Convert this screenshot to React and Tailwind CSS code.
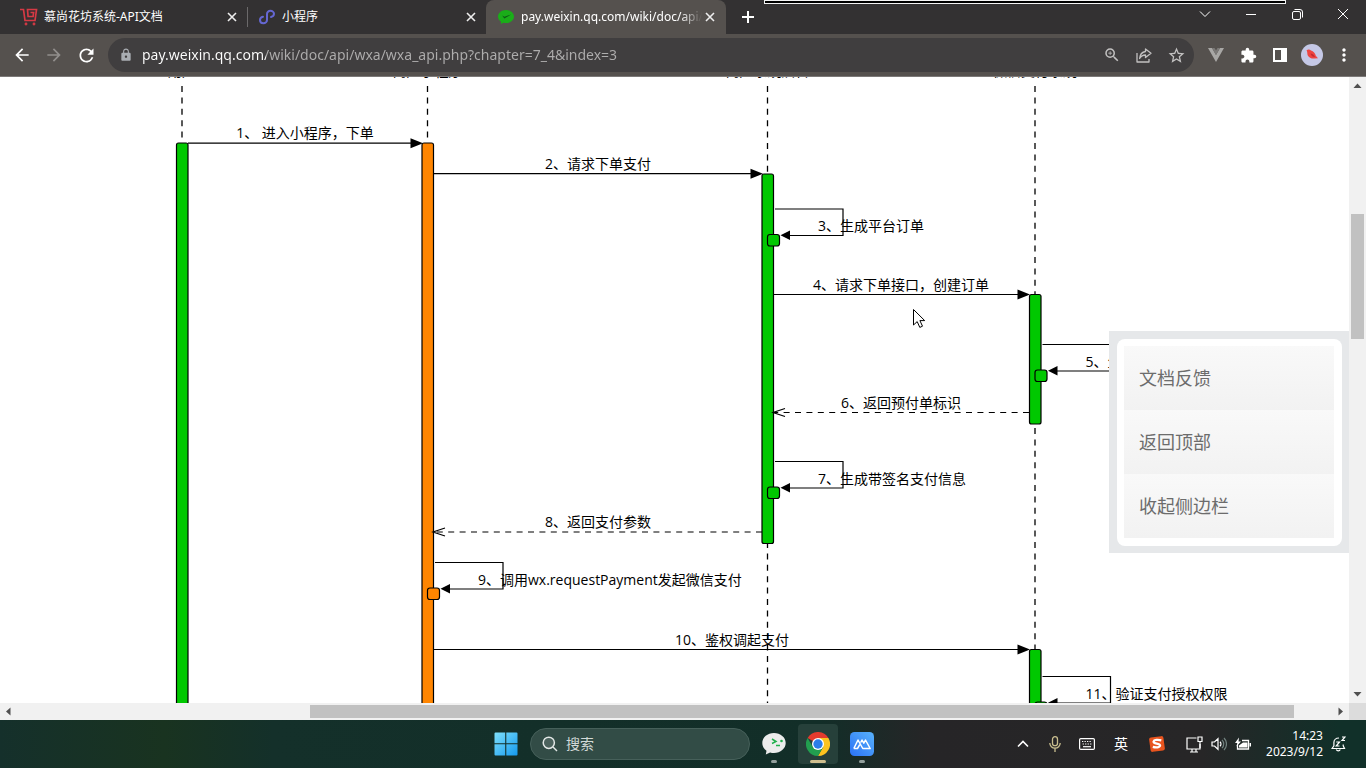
import React from "react";
import {
  MdArrowBack,
  MdArrowForward,
  MdRefresh,
  MdLock,
  MdStarBorder,
  MdExtension,
  MdMoreVert,
  MdOutlineZoomIn,
} from "react-icons/md";

const GREEN = "#00c800";
const ORANGE = "#ff8500";

/* ---------- Browser icons ---------- */

function CloseIcon() {
  return (
    <svg width="16" height="16" viewBox="0 0 16 16" stroke="currentColor" strokeWidth="1.6" fill="none">
      <path d="M4 4l8 8M12 4l-8 8" />
    </svg>
  );
}

function CartIcon() {
  return (
    <svg width="18" height="18" viewBox="0 0 18 18" fill="none" stroke="#d63a45" strokeWidth="1.7">
      <path d="M0 1.500h3.500l1.500 11h10l1.500-11H7.500l.6 7h5l.5-4H10.500" />
      <circle cx="6" cy="16" r=".6" />
      <circle cx="14" cy="16" r=".6" />
    </svg>
  );
}

function MiniProgramIcon() {
  return (
    <svg width="18" height="18" viewBox="0 0 18 18" fill="none" stroke="#6567d2" strokeWidth="2" strokeLinecap="round">
      <path d="M5 8.800C3 9.300 2 10.500 2 12c0 1.800 1.400 3.200 3.400 3.200S9 13.800 9 12V6c0-1.900 1.500-3.200 3.400-3.200S16 4.200 16 5.800c0 1.700-1.200 2.800-3 3.200" />
    </svg>
  );
}

function WxPayIcon() {
  return (
    <svg width="18" height="18" viewBox="0 0 18 18">
      <path fill="#1aad19" d="M9 2C4.500 2 1 4.900 1 8.600c0 2.200 1.200 4 3.100 5.200L3.700 16l2.600-1.300c.8.300 1.700.4 2.700.4 4.500 0 8-2.900 8-6.500S13.500 2 9 2z" />
      <path fill="#0c5a15" d="M5.200 7.500l2.100 3 7-4.100-6.900 2.300z" />
    </svg>
  );
}

function ShareIcon() {
  return (
    <svg width="18" height="18" viewBox="0 0 18 18" fill="none" stroke="currentColor" strokeWidth="1.300" strokeLinejoin="round">
      <path d="M2 7v9h12v-3" />
      <path d="M10.500 3l5.500 4.300-5.500 4.300V9C8 9 6 10 4.600 12.500 5 8.500 7 6 10.500 5.500z" />
    </svg>
  );
}

function VueIcon() {
  return (
    <svg width="16" height="16" viewBox="0 0 16 16">
      <path fill="#a8a7a5" d="M0 1h4l4 7 4-7h4L8 15z" />
      <path fill="#7c7a78" d="M4 1h2.500L8 3.600 9.500 1H12L8 8z" />
    </svg>
  );
}

function SidePanelIcon() {
  return (
    <svg width="14" height="14" viewBox="0 0 14 14">
      <path fill="#fff" fillRule="evenodd" d="M0 0h14v14H0zM2 2v10h6V2z" />
    </svg>
  );
}

function Avatar() {
  return (
    <svg width="22" height="22" viewBox="0 0 22 22">
      <circle cx="11" cy="11" r="11" fill="#c5c8e6" />
      <path fill="#ee4440" d="M5.500 6.500C6.700 5 8.800 5 10 6.500c2.500.8 4.300 2.800 4.800 5.200l2.200 2.600-3.200.2c-3 .5-5.800-.8-7-3-.6-1.500-.4-3.200-.8-4.300z" />
      <path fill="#c42a30" d="M9.500 9.500c2 .2 3.600 1.300 4.500 3.500-2.200 0-3.900-1-4.500-3.500z" />
    </svg>
  );
}

/* ---------- Browser chrome ---------- */

function Tab({ icon, title, active, divider }) {
  return (
    <div
      className={
        active
          ? "flex h-[34px] w-[240px] items-center rounded-t-lg bg-[#55514e] pr-2 pl-[11px]"
          : "flex h-[34px] w-[238px] items-center pr-[7px] pl-[10px]"
      }
    >
      <button type="button" className="flex min-w-0 flex-1 items-center gap-[6px] text-left">
        <span className="shrink-0">{icon}</span>
        <span
          className={
            active
              ? "overflow-hidden whitespace-nowrap text-xs text-white [mask-image:linear-gradient(to_right,black_88%,transparent)]"
              : "overflow-hidden whitespace-nowrap text-xs text-white"
          }
        >
          {title}
        </span>
      </button>
      <button type="button" aria-label="关闭标签页" className="shrink-0 text-[#eeeeee]">
        <CloseIcon />
      </button>
      {divider && <span className="ml-[7px] -mr-[7px] h-5 w-px bg-[#6b696a]" />}
    </div>
  );
}

function TabStrip() {
  return (
    <header className="relative flex h-[34px] shrink-0 items-end bg-[#333132]">
      <div className="flex pl-[10px]">
        <Tab icon={<CartIcon />} title="慕尚花坊系统-API文档" divider />
        <Tab icon={<MiniProgramIcon />} title="小程序" />
        <Tab icon={<WxPayIcon />} title="pay.weixin.qq.com/wiki/doc/api/wxa" active />
      </div>
      <button type="button" aria-label="新标签页" className="flex h-[34px] w-11 items-center justify-center text-white">
        <svg width="12" height="12" viewBox="0 0 12 12" stroke="currentColor" strokeWidth="2">
          <path d="M6 0v12M0 6h12" />
        </svg>
      </button>
      <div className="ml-auto flex h-[34px] items-start pt-[2px] text-white">
        <button type="button" aria-label="搜索标签页" className="flex h-6 w-[46px] items-center justify-center">
          <svg width="12" height="12" viewBox="0 0 12 12" fill="none" stroke="currentColor">
            <path d="M1 3.500l5 5 5-5" />
          </svg>
        </button>
        <button type="button" aria-label="最小化" className="flex h-6 w-[46px] items-center justify-center">
          <svg width="10" height="10" viewBox="0 0 10 10" stroke="currentColor">
            <path d="M0 5.500h10" />
          </svg>
        </button>
        <button type="button" aria-label="还原" className="flex h-6 w-[46px] items-center justify-center">
          <svg width="11" height="11" viewBox="0 0 11 11" fill="none" stroke="currentColor">
            <rect x=".5" y="2.500" width="8" height="8" rx="1.500" />
            <path d="M2.500 .5h5.500a2.500 2.500 0 0 1 2.500 2.500v5.500" />
          </svg>
        </button>
        <button type="button" aria-label="关闭" className="flex h-6 w-[46px] items-center justify-center">
          <svg width="12" height="12" viewBox="0 0 12 12" stroke="currentColor">
            <path d="M1 1l10 10M11 1L1 11" />
          </svg>
        </button>
      </div>
      <div className="absolute top-0 right-20 left-[764px] h-1 border border-[#f2f2f2] bg-black" />
    </header>
  );
}

function Toolbar() {
  return (
    <div className="flex h-[43px] shrink-0 items-center border-b border-[#7c7978] bg-[#55514e] pr-[6px]">
      <div className="flex w-[108px] items-center gap-3 pl-3 text-white">
        <button type="button" aria-label="后退"><MdArrowBack size={20} /></button>
        <button type="button" aria-label="前进" className="text-[#918e8c]"><MdArrowForward size={20} /></button>
        <button type="button" aria-label="刷新"><MdRefresh size={21} /></button>
      </div>
      <div className="flex h-[34px] min-w-0 flex-1 items-center rounded-full bg-[#403e3f] pr-2 pl-[11px] text-[#c2c1c1]">
        <MdLock size={14} className="shrink-0 text-[#a9adb2]" />
        <input
          type="text"
          aria-label="地址"
          defaultValue="pay.weixin.qq.com/wiki/doc/api/wxa/wxa_api.php?chapter=7_4&index=3"
          className="ml-[9px] min-w-0 flex-1 bg-[linear-gradient(to_right,#ffffff_124px,#aeadad_124px)] bg-clip-text text-sm text-transparent outline-none"
        />
        <div className="flex items-center gap-[14px]">
          <button type="button" aria-label="缩放"><MdOutlineZoomIn size={18} /></button>
          <button type="button" aria-label="分享"><ShareIcon /></button>
          <button type="button" aria-label="收藏"><MdStarBorder size={19} /></button>
        </div>
      </div>
      <div className="flex items-center pl-[6px] text-white">
        <button type="button" aria-label="Vue" className="flex w-8 justify-center"><VueIcon /></button>
        <button type="button" aria-label="扩展程序" className="flex w-8 justify-center"><MdExtension size={17} /></button>
        <button type="button" aria-label="侧边栏" className="flex w-8 justify-center"><SidePanelIcon /></button>
        <button type="button" aria-label="用户" className="flex w-8 justify-center"><Avatar /></button>
        <button type="button" aria-label="更多" className="flex w-8 justify-center"><MdMoreVert size={20} /></button>
      </div>
    </div>
  );
}

/* ---------- Sequence diagram ---------- */

function Bar({ x, y1, y2, fill }) {
  return <rect x={x} y={y1} width="11.500" height={y2 - y1} rx="2" fill={fill} stroke="#000" strokeWidth="1.200" />;
}

function Call({ from, to, y, label, cx }) {
  return (
    <g>
      <path d={`M${from} ${y}H${to - 10}`} stroke="#000" strokeWidth="1.200" />
      <path d={`M${to + 1} ${y}l-12.500-5v10z`} />
      <text x={cx} y={y - 5} textAnchor="middle">{label}</text>
    </g>
  );
}

function Reply({ from, to, y, label, cx }) {
  return (
    <g>
      <path d={`M${from} ${y}H${to}`} stroke="#000" strokeWidth="1.200" strokeDasharray="6 5.400" />
      <path d={`M${to + 11} ${y - 4}L${to - 1} ${y}l12 4`} fill="none" stroke="#000" strokeWidth="1.200" />
      <text x={cx} y={y - 5} textAnchor="middle">{label}</text>
    </g>
  );
}

function SelfCall({ x, y, label, fill }) {
  return (
    <g>
      <path d={`M${x + 1} ${y}H${x + 69}v26.500H${x + 14}`} fill="none" stroke="#000" strokeWidth="1.200" />
      <path d={`M${x + 6.5} ${y + 26.2}l9.500-4.800v9.600z`} />
      <rect x={x - 6.5} y={y + 25.5} width="12" height="11.500" rx="2.500" fill={fill} stroke="#000" strokeWidth="1.200" />
      <text x={x + 44} y={y + 22}>{label}</text>
    </g>
  );
}

function SequenceDiagram() {
  const lifelines = [
    { x: 182, name: "用户" },
    { x: 427.5, name: "商户小程序" },
    { x: 767.5, name: "商户系统后台" },
    { x: 1035, name: "微信支付系统" },
  ];
  return (
    <svg width="1600" height="900" viewBox="0 77 1600 900" className="block max-w-none shrink-0 font-['Open_Sans','Noto_Sans_CJK_SC',sans-serif] text-sm" role="img" aria-label="支付时序图">
      {lifelines.map((l) => (
        <g key={l.x}>
          <text x={l.x} y="76" textAnchor="middle">{l.name}</text>
          <path d={`M${l.x} 86V977`} stroke="#000" strokeWidth="1.300" strokeDasharray="6 5.400" />
        </g>
      ))}
      <Bar x={176.5} y1={143} y2={960} fill={GREEN} />
      <Bar x={422} y1={143} y2={960} fill={ORANGE} />
      <Bar x={762} y1={174} y2={543.5} fill={GREEN} />
      <Bar x={1029.5} y1={294.5} y2={424} fill={GREEN} />
      <Bar x={1029.5} y1={649.5} y2={960} fill={GREEN} />
      <Call from={188} to={422} y={143.2} cx={305} label="1、 进入小程序，下单" />
      <Call from={434} to={762} y={173.7} cx={598} label="2、请求下单支付" />
      <SelfCall x={774} y={209} fill={GREEN} label="3、生成平台订单" />
      <Call from={774} to={1029} y={294.5} cx={901} label="4、请求下单接口，创建订单" />
      <SelfCall x={1041.5} y={344.5} fill={GREEN} label="5、生成预付单" />
      <Reply from={1029} to={774} y={412.5} cx={901} label="6、返回预付单标识" />
      <SelfCall x={774} y={461.5} fill={GREEN} label="7、生成带签名支付信息" />
      <Reply from={762} to={434} y={532} cx={598} label="8、返回支付参数" />
      <SelfCall x={434} y={562.5} fill={ORANGE} label="9、调用wx.requestPayment发起微信支付" />
      <Call from={434} to={1029} y={649.5} cx={732} label="10、鉴权调起支付" />
      <SelfCall x={1041.5} y={676.5} fill={GREEN} label="11、验证支付授权权限" />
      <path
        d="M913.500 309.500v15.500l3.700-3.400 2.600 5.800 2.700-1.200-2.600-5.600h4.800z"
        fill="#fff"
        stroke="#000"
        strokeWidth="1"
      />
    </svg>
  );
}

function SidePanel() {
  return (
    <nav className="absolute top-[254px] right-0 w-60 bg-[#e6e8ea] pt-2 pr-[7px] pb-[7px] pl-2">
      <div className="rounded-lg bg-white pt-[7px] pr-2 pb-2 pl-[7px]">
        {["文档反馈", "返回顶部", "收起侧边栏"].map((t) => (
          <a
            key={t}
            href="#"
            className="flex h-16 items-center bg-linear-to-b from-[#f9f9f9] to-[#f2f2f2] pl-[15px] text-lg text-[#6c6c6c]"
          >
            {t}
          </a>
        ))}
      </div>
    </nav>
  );
}

function Arrow({ d }) {
  return (
    <svg width="17" height="17" viewBox="0 0 17 17" fill="#505050" className="shrink-0">
      <path d={d} />
    </svg>
  );
}

function Page() {
  return (
    <>
      <div className="flex min-h-0 flex-1">
        <main className="relative min-w-0 flex-1 overflow-hidden bg-white">
          <SequenceDiagram />
          <SidePanel />
        </main>
        <div className="flex w-[17px] shrink-0 flex-col bg-[#f1f1f1]">
          <Arrow d="M4.500 11h8l-4-4.500z" />
          <div className="flex min-h-0 flex-1 flex-col px-[2px]">
            <div className="h-[20.300%]" />
            <div className="h-[21.100%] bg-[#c1c1c1]" />
          </div>
          <Arrow d="M4.500 6h8l-4 4.500z" />
        </div>
      </div>
      <div className="flex h-[17px] shrink-0 bg-[#f1f1f1]">
        <Arrow d="M10.500 4.500v8L6 8.500z" />
        <div className="flex min-w-0 flex-1 py-[2px]">
          <div className="w-[22.300%]" />
          <div className="w-[74.800%] bg-[#c1c1c1]" />
        </div>
        <Arrow d="M6.500 4.500v8l4.500-4z" />
        <div className="w-[17px] bg-[#dcdcdc]" />
      </div>
    </>
  );
}

/* ---------- Taskbar ---------- */

function WindowsLogo() {
  return (
    <svg width="24" height="24" viewBox="0 0 24 24">
      <defs>
        <linearGradient id="win" x1="0" y1="0" x2="1" y2="1" gradientUnits="objectBoundingBox">
          <stop offset="0" stopColor="#7fe0fb" />
          <stop offset="1" stopColor="#1499ee" />
        </linearGradient>
      </defs>
      <path fill="url(#win)" d="M.5 1.500a1 1 0 0 1 1-1h9.700v10.700H.5zM12.300.5H22.500a1 1 0 0 1 1 1v9.700H12.300zM.5 12.300h10.700v11.200H1.500a1 1 0 0 1-1-1zM12.300 12.300h11.200v10.200a1 1 0 0 1-1 1H12.300z" />
    </svg>
  );
}

function DevToolsIcon() {
  return (
    <svg width="24" height="24" viewBox="0 0 24 24">
      <path fill="#ececec" d="M12 1C5.500 1 .3 5.300.3 11c0 3.200 1.700 6 4.200 7.800L3.800 22.500l4.300-2.100c1.200.4 2.500.6 3.900.6 6.500 0 11.700-4.400 11.700-10S18.500 1 12 1z" />
      <path d="M10 7l4 2.500-4 2M14 13.500h4" fill="none" stroke="#22b04c" strokeWidth="1.500" />
      <circle cx="19.500" cy="9" r="1.300" fill="#22b04c" />
    </svg>
  );
}

function ChromeIcon() {
  return (
    <svg width="24" height="24" viewBox="0 0 24 24">
      <path fill="#e33b2e" d="M12 12L1.600 6A12 12 0 0 1 22.400 6z" />
      <path fill="#fcc31e" d="M12 6h10.400A12 12 0 0 1 12 24l5.200-9z" />
      <path fill="#229e4f" d="M1.600 6A12 12 0 0 0 12 24l5.200-9-5.200 1-5.200-1z" />
      <circle cx="12" cy="12" r="6" fill="#fff" />
      <circle cx="12" cy="12" r="4.700" fill="#2b7de9" />
    </svg>
  );
}

function ModaoIcon() {
  return (
    <svg width="24" height="24" viewBox="0 0 24 24">
      <defs>
        <linearGradient id="modao" x1="0" y1="1" x2="1" y2="0">
          <stop offset="0" stopColor="#2b72f6" />
          <stop offset="1" stopColor="#58b2fb" />
        </linearGradient>
      </defs>
      <rect width="24" height="24" rx="4.500" fill="url(#modao)" />
      <path d="M3.800 16.500h3.700l2.200-3.800M3.800 16.500L8 8l4.800 8.500h2.400M10.700 10.500L12 8l1.800 3.200L15.500 8l4.700 8.500h-5" fill="none" stroke="#fff" strokeWidth="1.500" strokeLinejoin="round" />
    </svg>
  );
}

function TaskbarApp({ label, children, active }) {
  return (
    <button
      type="button"
      aria-label={label}
      className={
        active
          ? "flex h-10 w-10 flex-col items-center justify-between rounded bg-[#26403a] pt-2"
          : "flex h-10 w-10 flex-col items-center justify-between rounded pt-2"
      }
    >
      {children}
      <span className={active ? "mb-px h-[3px] w-4 rounded-full bg-[#cfc08f]" : "mb-px h-[3px] w-[6px] rounded-full bg-[#94a09d]"} />
    </button>
  );
}

function Tray() {
  const line = { fill: "none", stroke: "#fff", strokeWidth: 1.3 };
  return (
    <div className="flex items-center justify-end pr-5 text-xs text-white">
      <button type="button" aria-label="显示隐藏的图标" className="flex w-8 justify-center">
        <svg width="12" height="8" viewBox="0 0 12 8" {...line} strokeWidth="1.600"><path d="M1 6.500l5-5 5 5" /></svg>
      </button>
      <button type="button" aria-label="麦克风" className="flex w-8 justify-center">
        <svg width="12" height="16" viewBox="0 0 12 16" fill="none" stroke="#c9be8f" strokeWidth="1.300">
          <rect x="3.500" y=".7" width="5" height="9" rx="2.500" />
          <path d="M.8 7a5.200 5.200 0 0 0 10.400 0M6 12.300V16" />
        </svg>
      </button>
      <button type="button" aria-label="键盘" className="flex w-8 justify-center">
        <svg width="16" height="12" viewBox="0 0 16 12" {...line} strokeWidth="1.200">
          <rect x=".6" y=".6" width="14.800" height="10.800" rx="1.200" />
          <path d="M3 3.500h10M3.600 6h9" strokeDasharray="1.300 1.200" />
          <path d="M4 8.700h8" />
        </svg>
      </button>
      <button type="button" className="flex w-9 justify-center text-sm">英</button>
      <button type="button" aria-label="搜狗输入法" className="flex w-9 justify-center">
        <svg width="16" height="16" viewBox="0 0 16 16">
          <rect x=".8" y=".8" width="14.400" height="14.400" rx="2" fill="#e8541e" transform="rotate(-8 8 8)" />
          <path d="M12.300 4.300C9 3.500 5 3.700 4.600 5.600c-.4 2.300 6.700 1.500 6.500 3.900-.2 2-4.200 2.300-7.300 1.400" fill="none" stroke="#fff" strokeWidth="2.300" />
        </svg>
      </button>
      <button type="button" aria-label="网络、音量和电池" className="flex items-center gap-2 pr-1 pl-[11px]">
        <svg width="17" height="17" viewBox="0 0 17 17" {...line}>
          <path d="M10.500 2H1v11h13V8M4 16h8M6 13v3M10 13v3" strokeWidth="1.200" />
          <path d="M12 1h4v4.500h-4zM14 5.500V12" strokeWidth="1.200" />
        </svg>
        <svg width="16" height="14" viewBox="0 0 16 14" {...line} strokeWidth="1.200">
          <path d="M1 5v4h2.500L7 12.300V1.700L3.500 5zM9 4.800a3 3 0 0 1 0 4.400" />
          <path d="M11 2.800a6 6 0 0 1 0 8.400M13 1a8.500 8.500 0 0 1 0 12" stroke="#71817e" />
        </svg>
        <svg width="17" height="14" viewBox="0 0 17 14" {...line}>
          <path d="M7 3.500h6.500v8.500h-11V8" />
          <path fill="#fff" stroke="none" d="M4 .5L0 6h2.300L1.500 9.500 6 4.500H3.500zM8 5.500h4.500v5H4V8.500zM14.500 6H16v3.500h-1.500z" />
        </svg>
      </button>
      <time className="pl-[10px] text-right text-xs leading-4">
        14:23
        <br />
        2023/9/12
      </time>
      <button type="button" aria-label="通知" className="pl-2">
        <svg width="15" height="16" viewBox="0 0 15 16" {...line} strokeWidth="1.200">
          <path d="M8 2C4.700 2 2.900 4 2.900 6.500v3.300L1 12.500h12.500l-1.300-2.700V8.500M5.300 13.500a2.200 2.200 0 0 0 4 0" />
          <path d="M5.200 6h3.300l-3.300 4h3.300M11 1h3l-3 3.500h3" />
        </svg>
      </button>
    </div>
  );
}

function Taskbar() {
  return (
    <footer className="grid h-12 shrink-0 grid-cols-[1fr_auto_1fr] items-center bg-[linear-gradient(to_right,#15302b_0%,#193320_12%,#14302a_20%,#122e28_60%,#262527_68%,#272627_88%,#113029_98%)] pl-[10px]">
      <div />
      <div className="flex items-center">
        <button type="button" aria-label="开始" className="mr-3"><WindowsLogo /></button>
        <label className="mr-1 flex h-8 w-[220px] items-center rounded-full border border-[#46605a] bg-[#324c46] px-[11px]">
          <svg width="16" height="16" viewBox="0 0 16 16" fill="none" stroke="#e3e8e7" strokeWidth="1.500" className="shrink-0">
            <circle cx="6.800" cy="6.800" r="5.600" fill="#4b625d" />
            <path d="M11 11l4 4" />
          </svg>
          <input
            type="search"
            aria-label="搜索"
            placeholder="搜索"
            className="ml-2 w-full min-w-0 bg-transparent text-sm text-white placeholder-[#d3dad8] outline-none"
          />
        </label>
        <div className="flex gap-1">
          <TaskbarApp label="微信开发者工具"><DevToolsIcon /></TaskbarApp>
          <TaskbarApp label="Chrome" active><ChromeIcon /></TaskbarApp>
          <TaskbarApp label="墨刀"><ModaoIcon /></TaskbarApp>
        </div>
      </div>
      <Tray />
    </footer>
  );
}

export default function App() {
  return (
    <div className="flex h-screen flex-col overflow-hidden bg-white font-['Noto_Sans','Noto_Sans_CJK_SC',sans-serif]">
      <TabStrip />
      <Toolbar />
      <Page />
      <Taskbar />
    </div>
  );
}
